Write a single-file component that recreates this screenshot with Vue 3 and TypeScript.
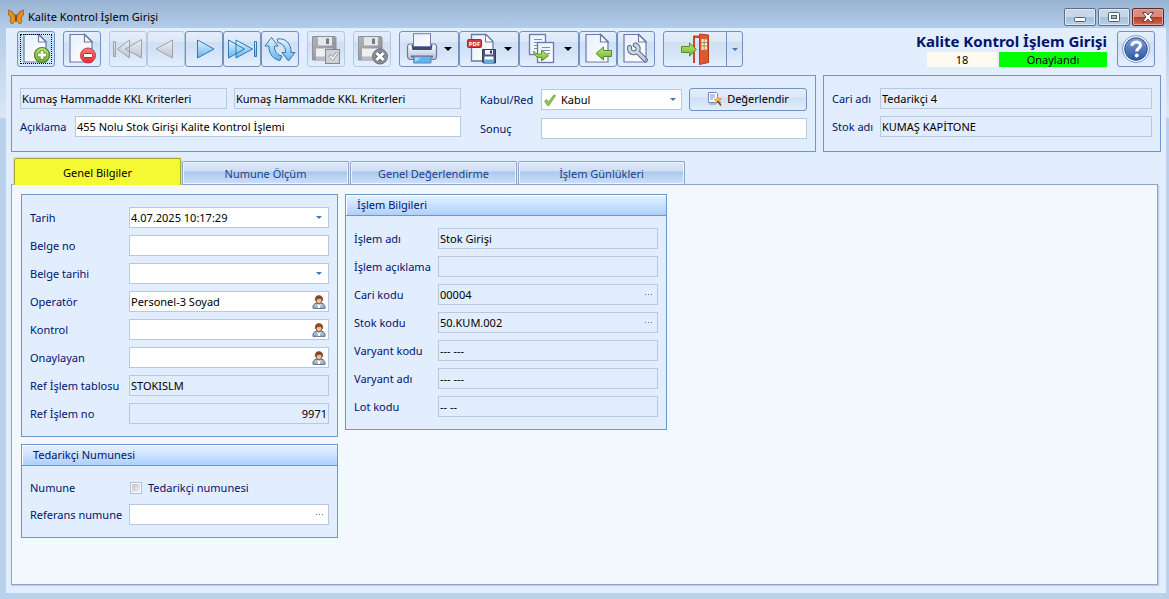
<script setup lang="ts">
import { ref } from 'vue'

type Adornment = 'date' | 'user' | 'more' | ''

interface Field {
  id: string
  label: string
  value: string
  adornment: Adornment
  readonly: boolean
  right?: boolean
}

const general = ref<Field[]>([
  { id: 'tarih', label: 'Tarih', value: '4.07.2025 10:17:29', adornment: 'date', readonly: false },
  { id: 'belge-no', label: 'Belge no', value: '', adornment: '', readonly: false },
  { id: 'belge-tarihi', label: 'Belge tarihi', value: '', adornment: 'date', readonly: false },
  { id: 'operator', label: 'Operatör', value: 'Personel-3 Soyad', adornment: 'user', readonly: false },
  { id: 'kontrol', label: 'Kontrol', value: '', adornment: 'user', readonly: false },
  { id: 'onaylayan', label: 'Onaylayan', value: '', adornment: 'user', readonly: false },
  { id: 'ref-tablo', label: 'Ref İşlem tablosu', value: 'STOKISLM', adornment: '', readonly: true },
  { id: 'ref-no', label: 'Ref İşlem no', value: '9971', adornment: '', readonly: true, right: true }
])

const operation = ref<Field[]>([
  { id: 'islem-adi', label: 'İşlem adı', value: 'Stok Girişi', adornment: '', readonly: true },
  { id: 'islem-aciklama', label: 'İşlem açıklama', value: '', adornment: '', readonly: true },
  { id: 'cari-kodu', label: 'Cari kodu', value: '00004', adornment: 'more', readonly: true },
  { id: 'stok-kodu', label: 'Stok kodu', value: '50.KUM.002', adornment: 'more', readonly: true },
  { id: 'varyant-kodu', label: 'Varyant kodu', value: '--- ---', adornment: '', readonly: true },
  { id: 'varyant-adi', label: 'Varyant adı', value: '--- ---', adornment: '', readonly: true },
  { id: 'lot-kodu', label: 'Lot kodu', value: '-- --', adornment: '', readonly: true }
])

const tabs = ['Genel Bilgiler', 'Numune Ölçüm', 'Genel Değerlendirme', 'İşlem Günlükleri']
const activeTab = ref(0)

const criteriaCode = ref('Kumaş Hammadde KKL Kriterleri')
const criteriaName = ref('Kumaş Hammadde KKL Kriterleri')
const description = ref('455 Nolu Stok Girişi Kalite Kontrol İşlemi')
const decision = ref('Kabul')
const result = ref('')
const account = ref('Tedarikçi 4')
const stock = ref('KUMAŞ KAPİTONE')
const supplierSample = ref(false)
const referenceSample = ref('')
</script>

<template>
  <div class="window">
    <svg class="defs" width="0" height="0" aria-hidden="true">
      <defs>
        <linearGradient id="gPage" x1="0" y1="0" x2="1" y2="1">
          <stop offset="0" stop-color="#e9effa" /><stop offset="1" stop-color="#ffffff" />
        </linearGradient>
        <linearGradient id="gBlue" x1="0" y1="0" x2="0" y2="1">
          <stop offset="0" stop-color="#e4f6ff" /><stop offset="1" stop-color="#62b4ee" />
        </linearGradient>
        <linearGradient id="gGrey" x1="0" y1="0" x2="0" y2="1">
          <stop offset="0" stop-color="#eceef2" /><stop offset="1" stop-color="#bfc4cc" />
        </linearGradient>
        <linearGradient id="gGreen" x1="0" y1="0" x2="0" y2="1">
          <stop offset="0" stop-color="#c5e878" /><stop offset="1" stop-color="#6db32c" />
        </linearGradient>
        <linearGradient id="gRed" x1="0" y1="0" x2="0" y2="1">
          <stop offset="0" stop-color="#fb8080" /><stop offset="1" stop-color="#e02733" />
        </linearGradient>
        <linearGradient id="gDisk" x1="0" y1="0" x2="1" y2="1">
          <stop offset="0" stop-color="#b3b5ba" /><stop offset="1" stop-color="#85888f" />
        </linearGradient>
        <linearGradient id="gHelp" x1="0" y1="0" x2="0" y2="1">
          <stop offset="0" stop-color="#7f9fd6" /><stop offset="1" stop-color="#2d57a5" />
        </linearGradient>
        <linearGradient id="gPrinter" x1="0" y1="0" x2="0" y2="1">
          <stop offset="0" stop-color="#ffffff" /><stop offset="1" stop-color="#b5bfd8" />
        </linearGradient>
        <symbol id="page" viewBox="0 0 32 32">
          <path d="M4 1.500h15l7 7v20.500H4z" fill="url(#gPage)" stroke="#687ba8" stroke-width="1.200" />
          <path d="M18.500 1.500v7.500H26z" fill="#fff" stroke="#687ba8" stroke-width="1.200" />
        </symbol>
        <symbol id="disk" viewBox="0 0 32 32">
          <path d="M2.500 3.500h22.500l1 1v22.500h-23.500z" fill="url(#gDisk)" stroke="#8d9098" />
          <path d="M8 4h14v8.500H8z" fill="#e6e7ea" />
          <path d="M16 5.500h3v5.500h-3z" fill="#777a82" />
          <path d="M6 15.500h16.500V27H6z" fill="#f0f0f2" />
          <path d="M6 23.500h16.500V27H6z" fill="#b9bbc1" />
        </symbol>
        <symbol id="user" viewBox="0 0 14 14">
          <path d="M1 13.300c-.3-2.800.8-4.500 3.500-5.300h5c2.700.8 3.800 2.500 3.500 5.300z" fill="#a9b9cf" stroke="#54627b" />
          <path d="M5.300 8 7 10.500 8.700 8 8 13H6z" fill="#fff" />
          <ellipse cx="7" cy="5.300" rx="2.800" ry="3.500" fill="#f3c095" stroke="#704228" stroke-width=".8" />
          <path d="M3.500 6C2.700 2 4.500.5 7.200.6c2.800.1 4 2 3.300 5.400C10 4 9 3.300 7.500 3.600 5.500 4 4.300 3.800 3.500 6z" fill="#8c4a22" stroke="#5e3217" stroke-width=".5" />
        </symbol>
      </defs>
    </svg>

    <header class="titlebar">
      <svg class="app-icon" width="16" height="16" viewBox="0 0 16 16" aria-hidden="true">
        <path d="M7.600 9C7.200 5 4 1.500.3 1.200c-.3 2.800.2 5.300 1.700 6.500l1.200.8C2 10 1.900 13 3.500 14.700 6 14.500 7.500 12 7.700 9.500z" fill="#ef9013" stroke="#7d4a14" stroke-width=".7" />
        <path d="M8.400 9C8.800 5 12 1.500 15.700 1.200c.3 2.800-.2 5.300-1.700 6.500l-1.200.8c1.200 1.500 1.300 4.500-.3 6.200C10 14.500 8.500 12 8.300 9.500z" fill="#ef9013" stroke="#7d4a14" stroke-width=".7" />
        <path d="M2 3c2 1 4 3 5 5.500M14 3c-2 1-4 3-5 5.500" stroke="#c96a0b" stroke-width=".7" fill="none" />
        <path d="M8 5.500v7" stroke="#50351f" stroke-width="1.200" />
      </svg>
      <span class="caption">Kalite Kontrol İşlem Girişi</span>
      <div class="window-buttons">
        <button type="button" class="wbtn" aria-label="Simge durumuna küçült">
          <svg width="12" height="12" viewBox="0 0 12 12"><rect x=".5" y="6.500" width="11" height="4" rx="1" fill="#fff" stroke="#535d6b" /></svg>
        </button>
        <button type="button" class="wbtn" aria-label="Ekranı kapla">
          <svg width="12" height="12" viewBox="0 0 12 12"><rect x=".5" y="1.500" width="11" height="9" rx="1" fill="#fff" stroke="#535d6b" /><rect x="3.500" y="4.500" width="5" height="3" fill="#a6b9d2" stroke="#535d6b" /></svg>
        </button>
        <button type="button" class="wbtn close" aria-label="Kapat">
          <svg width="12" height="12" viewBox="0 0 12 12"><path d="M.6 1.500h3.400l2 2.500 2-2.500h3.400L8.200 6l3.200 4.500H8L6 8l-2 2.500H.6L3.800 6z" fill="#fff" stroke="#5b4045" /></svg>
        </button>
      </div>
    </header>

    <main class="client">
      <div class="toolbar">
        <div class="tools">
          <button type="button" class="tool focused" aria-label="Yeni">
            <svg width="32" height="32" viewBox="0 0 32 32">
              <use href="#page" />
              <circle cx="22" cy="22" r="7.500" fill="url(#gGreen)" stroke="#477f1f" stroke-width="1.200" />
              <path d="M22 17.500v9M17.500 22h9" stroke="#477f1f" stroke-width="4.600" />
              <path d="M22 18v8M18 22h8" stroke="#fff" stroke-width="2.800" />
            </svg>
          </button>
          <button type="button" class="tool" aria-label="Sil">
            <svg width="32" height="32" viewBox="0 0 32 32">
              <use href="#page" />
              <circle cx="22" cy="22.500" r="7.500" fill="url(#gRed)" stroke="#c93744" />
              <rect x="17.500" y="20.500" width="9" height="4" rx="1" fill="#fff" stroke="#b82732" />
            </svg>
          </button>

          <div class="tool-group">
            <button type="button" class="tool" disabled aria-label="İlk kayıt">
              <svg width="32" height="32" viewBox="0 0 32 32" fill="url(#gGrey)" stroke="#9ca1aa">
                <path d="M1.500 8.500h2v15h-2zM5.500 16 17.500 7v18zM13.500 16 29.500 6.500v18.500z" />
              </svg>
            </button>
            <button type="button" class="tool" disabled aria-label="Önceki kayıt">
              <svg width="32" height="32" viewBox="0 0 32 32" fill="url(#gGrey)" stroke="#9ca1aa">
                <path d="M6 16 22.500 7v18z" />
              </svg>
            </button>
            <button type="button" class="tool" aria-label="Sonraki kayıt">
              <svg width="32" height="32" viewBox="0 0 32 32" fill="url(#gBlue)" stroke="#3376b7">
                <path d="M26 16 9.500 7v18z" />
              </svg>
            </button>
            <button type="button" class="tool" aria-label="Son kayıt">
              <svg width="32" height="32" viewBox="0 0 32 32" fill="url(#gBlue)" stroke="#3376b7">
                <path d="M18.500 16 2.500 7v18zM26.500 16 10 7v18zM28.500 8.500h2v15h-2z" />
              </svg>
            </button>
            <button type="button" class="tool" aria-label="Yenile">
              <svg width="32" height="32" viewBox="0 0 32 32" fill="url(#gBlue)" stroke="#39749f" stroke-linejoin="round">
                <path d="M7.500 4.500 14 13h-3.500c-.5 5 2.500 9 7.500 10l-2 4.500C9 26.500 4.500 20.500 5 13H1z" />
                <path d="M24.500 28 18 19.500h3.500c.5-5-2.500-9-7.500-10l-.8-3.500c8.300-1.500 14.300 5 13.800 13.500h4z" />
              </svg>
            </button>
          </div>

          <button type="button" class="tool" disabled aria-label="Kaydet">
            <svg width="32" height="32" viewBox="0 0 32 32">
              <use href="#disk" />
              <rect x="15.500" y="16.500" width="14" height="14" fill="#cfd1d5" stroke="#83868c" />
              <path d="m18.500 23 2.500-1.500 1.800 2.500 3.700-5 1.500 1.500L23 27.500z" fill="#f5f5f6" stroke="#8b8e94" stroke-width=".8" />
            </svg>
          </button>
          <button type="button" class="tool" disabled aria-label="Vazgeç">
            <svg width="32" height="32" viewBox="0 0 32 32">
              <use href="#disk" />
              <circle cx="24" cy="23.500" r="7.500" fill="#8d9096" stroke="#6b6e75" />
              <path d="m20.500 20 7 7M27.500 20l-7 7" stroke="#65686f" stroke-width="4.600" />
              <path d="m20.500 20 7 7M27.500 20l-7 7" stroke="#fff" stroke-width="3" />
            </svg>
          </button>

          <div class="tool-group">
            <button type="button" class="tool wide" aria-label="Yazdır">
              <svg width="32" height="32" viewBox="0 0 32 32">
                <path d="M1.500 14c0-1.500 1-3 2.500-3h3v4.500h18V11h3c1.500 0 2.500 1.500 2.500 3v9c0 2-1 3.500-3 3.500H4.500c-2 0-3-1.500-3-3.500z" fill="url(#gPrinter)" stroke="#68779d" stroke-width="1.200" />
                <path d="M5.500 12h21l-1 5h-19z" fill="#404a66" />
                <rect x="7.500" y=".7" width="17" height="12.800" fill="url(#gPage)" stroke="#6d7fad" />
                <path d="M5 22.500h22v2H5z" fill="#5d6b8d" />
                <path d="M8 23.500h17v6.500H7.500z" fill="#5bb6ef" stroke="#7283a8" />
                <path d="m9 29 6-4.500H9z" fill="#a8dcfa" />
              </svg>
              <i class="drop"></i>
            </button>
            <button type="button" class="tool wide" aria-label="PDF olarak kaydet">
              <svg width="32" height="32" viewBox="0 0 32 32">
                <path d="M5.500 1.500h14.500l7 7V28H5.500z" fill="url(#gPage)" stroke="#687ba8" stroke-width="1.300" />
                <path d="M19.500 1.500V9H27z" fill="#fff" stroke="#687ba8" />
                <rect x="1.500" y="6.500" width="14" height="8" rx="1" fill="#d73940" stroke="#b41e27" />
                <text x="8.500" y="13" text-anchor="middle" class="pdf">PDF</text>
                <path d="M16.500 16.500h13v13.500h-12l-1-1z" fill="#46567c" stroke="#303d5b" />
                <path d="M19 17h8v4.500h-8z" fill="#eef2fb" /><path d="M24 17.500h2v3h-2z" fill="#34405d" />
                <path d="M18.500 23.500h9v6h-9z" fill="#fff" /><path d="M18.500 26.500h9v3h-9z" fill="#4eafec" />
              </svg>
              <i class="drop"></i>
            </button>
            <button type="button" class="tool wide" aria-label="Kopyala">
              <svg width="32" height="32" viewBox="0 0 32 32">
                <rect x="3.500" y="1.500" width="16" height="20" fill="url(#gPage)" stroke="#687ba8" stroke-width="1.300" />
                <path d="M8 6.500h8M8 9.500h5M8 12.500h3M8 15.500h3" stroke="#6f91c8" />
                <rect x="11.500" y="9.500" width="16" height="20" fill="url(#gPage)" stroke="#687ba8" stroke-width="1.300" />
                <path d="M16 14.500h8M16 17.500h8M21 20.500h3" stroke="#6f91c8" />
                <path d="M7.500 18c2 3 5 3.500 8 3v-3.500l7 5.200-7 5.300v-3.500C11 25 8 22.500 7.500 18z" fill="url(#gGreen)" stroke="#59912a" />
              </svg>
              <i class="drop"></i>
            </button>
            <button type="button" class="tool" aria-label="İçe aktar">
              <svg width="32" height="32" viewBox="0 0 32 32">
                <use href="#page" />
                <path d="m14 20.500 7.500-6.500v3.500h8v6h-8V27z" fill="url(#gGreen)" stroke="#4f8e28" />
              </svg>
            </button>
            <button type="button" class="tool" aria-label="Ayarlar">
              <svg width="32" height="32" viewBox="0 0 32 32" fill="none" stroke-linecap="round">
                <use href="#page" />
                <path d="M9.500 14.500c-.5 3 1.500 5.500 4.500 5.200 3-.2 4.500-2.200 4.200-4.500-.2-1.600-1.200-2.700-3-3.200M17 18.500l8.500 8.500" stroke="#5a6a88" stroke-width="5" />
                <path d="M9.500 14.500c-.5 3 1.500 5.500 4.500 5.200 3-.2 4.500-2.200 4.200-4.500-.2-1.600-1.200-2.700-3-3.200M17 18.500l8.500 8.500" stroke="#c9d4e5" stroke-width="3" />
                <circle cx="25.500" cy="27" r=".8" fill="#58698a" />
              </svg>
            </button>
          </div>

          <div class="tool-group split">
            <button type="button" class="tool exit" aria-label="Çıkış">
              <svg width="32" height="32" viewBox="0 0 32 32">
                <path d="M14 30V2.500h9V5h-7v25z" fill="#cb4926" />
                <path d="m20.500 1 9 1v27.500l-9 2z" fill="#dd5a30" stroke="#b43c1c" />
                <path d="m22.500 6 5.500.4v10l-5.500.6z" fill="#f7ecc4" />
                <path d="M25.200 6v11M22.500 9.500H28M22.500 13H28" stroke="#a58a5c" />
                <path d="M2.500 13.500h8V10l7 6.500-7 6.500v-3.500h-8z" fill="url(#gGreen)" stroke="#4f8e28" />
              </svg>
            </button>
            <button type="button" class="tool narrow" aria-label="Çıkış seçenekleri"><i class="caret"></i></button>
          </div>
        </div>

        <div class="status">
          <h1>Kalite Kontrol İşlem Girişi</h1>
          <div class="status-row">
            <span class="record">18</span>
            <span class="state">Onaylandı</span>
          </div>
        </div>
        <button type="button" class="tool" aria-label="Yardım">
          <svg width="32" height="32" viewBox="0 0 32 32">
            <circle cx="16" cy="16" r="13.500" fill="#f4f8ff" stroke="#7f9ccb" />
            <circle cx="16" cy="16" r="11.300" fill="url(#gHelp)" stroke="#2c509b" />
            <path d="M12 12.800c.2-5 8.500-5 8.500-.5 0 3-3.800 3-3.800 6.200" fill="none" stroke="#fff" stroke-width="3.200" />
            <circle cx="16.700" cy="22.500" r="2" fill="#fff" />
          </svg>
        </button>
      </div>

      <div class="summary">
        <section class="box summary-main">
          <div class="left">
            <div class="pair">
              <input v-model="criteriaCode" class="input ro code" readonly aria-label="Kriter kodu" />
              <input v-model="criteriaName" class="input ro name" readonly aria-label="Kriter adı" />
            </div>
            <div class="line l-desc">
              <label for="aciklama">Açıklama</label>
              <input id="aciklama" v-model="description" class="input" />
            </div>
          </div>
          <div class="right">
            <div class="line l-dec">
              <label for="kabul">Kabul/Red</label>
              <div class="field decision">
                <select id="kabul" v-model="decision" class="input">
                  <option>Kabul</option>
                  <option>Red</option>
                </select>
                <svg class="tick" width="12" height="12" viewBox="0 0 12 12" aria-hidden="true">
                  <path d="m.7 7 2-1.500L4.300 8 10 1l1.500.5L5 11.500H3.500z" fill="#8fc653" stroke="#70a03e" stroke-width=".8" />
                </svg>
                <i class="caret end"></i>
              </div>
              <button type="button" class="evaluate">
                <svg width="15" height="14" viewBox="0 0 15 14" aria-hidden="true">
                  <path d="M1.500.5h8l1 1v9h-9z" fill="#fff" stroke="#7587b5" />
                  <path d="M3 3h5M3 5h5M3 7h3" stroke="#7194ca" />
                  <path d="M2 12h7" stroke="#8793b1" />
                  <path d="m10.500 4.500 1.200 2.200 2.600-.2-1.700 2 1 2.500-2.400-1-2.100 1.500.3-2.500L7.500 7.500l2.400-.5z" fill="#ffc93c" stroke="#e68122" stroke-width=".8" />
                  <path d="m10.500 9 3.500 4.500" stroke="#454d66" stroke-width="1.400" />
                </svg>
                <span>Değerlendir</span>
              </button>
            </div>
            <div class="line l-dec">
              <label for="sonuc">Sonuç</label>
              <input id="sonuc" v-model="result" class="input" />
            </div>
          </div>
        </section>
        <section class="box summary-side">
          <div class="line l-side">
            <label for="cari-adi">Cari adı</label>
            <input id="cari-adi" v-model="account" class="input ro" readonly />
          </div>
          <div class="line l-side">
            <label for="stok-adi">Stok adı</label>
            <input id="stok-adi" v-model="stock" class="input ro" readonly />
          </div>
        </section>
      </div>

      <div class="tabs" role="tablist">
        <button
          v-for="(tab, i) in tabs"
          :key="tab"
          type="button"
          role="tab"
          class="tab"
          :class="{ active: i === activeTab }"
          :aria-selected="i === activeTab"
          @click="activeTab = i"
        >{{ tab }}</button>
      </div>

      <div class="panel" role="tabpanel">
        <div v-if="activeTab === 0" class="columns">
          <div class="col first">
            <section class="box form">
              <div v-for="f in general" :key="f.id" class="line l-gen">
                <label :for="f.id">{{ f.label }}</label>
                <div class="field">
                  <input :id="f.id" v-model="f.value" class="input" :class="{ ro: f.readonly, num: f.right }" :readonly="f.readonly" />
                  <button v-if="f.adornment" type="button" class="adorn" :aria-label="f.label + ' seç'">
                    <i v-if="f.adornment === 'date'" class="caret"></i>
                    <svg v-else width="14" height="14"><use href="#user" /></svg>
                  </button>
                </div>
              </div>
            </section>
            <section class="box">
              <h2>Tedarikçi Numunesi</h2>
              <div class="form">
                <div class="line l-gen short">
                  <span class="text">Numune</span>
                  <label class="check"><input v-model="supplierSample" type="checkbox" /><span>Tedarikçi numunesi</span></label>
                </div>
                <div class="line l-gen">
                  <label for="ref-numune">Referans numune</label>
                  <div class="field">
                    <input id="ref-numune" v-model="referenceSample" class="input" />
                    <button type="button" class="adorn" aria-label="Referans numune seç"><i class="dots"></i></button>
                  </div>
                </div>
              </div>
            </section>
          </div>
          <div class="col second">
            <section class="box">
              <h2>İşlem Bilgileri</h2>
              <div class="form">
                <div v-for="f in operation" :key="f.id" class="line l-op">
                  <label :for="f.id">{{ f.label }}</label>
                  <div class="field">
                    <input :id="f.id" v-model="f.value" class="input ro" readonly />
                    <button v-if="f.adornment" type="button" class="adorn" :aria-label="f.label + ' seç'"><i class="dots"></i></button>
                  </div>
                </div>
              </div>
            </section>
          </div>
        </div>
      </div>
    </main>
  </div>
</template>

<style>
html,
body {
  margin: 0;
  background: #b9d1ea;
}
</style>

<style scoped>
.window,
.window * {
  box-sizing: border-box;
}
.window {
  min-height: 100vh;
  display: flex;
  flex-direction: column;
  padding: 0 3px 6px 6px;
  background: linear-gradient(#98b3d2 0, #b3cce8 28px, #dbe7f4 117px, #b9d1ea 119px);
  font-family: "Noto Sans", "Open Sans", sans-serif;
  font-size: 11px;
  line-height: 16px;
  color: #00146e;
}
button,
input,
select {
  font: inherit;
  margin: 0;
}
.defs {
  position: absolute;
}
.titlebar {
  height: 28px;
  display: flex;
  align-items: center;
  padding: 5px 2px 0 2px;
  color: #000;
}
.caption {
  flex: 1;
  margin-left: 4px;
}
.window-buttons {
  display: flex;
  gap: 2px;
}
.wbtn {
  width: 32px;
  height: 18px;
  padding: 0;
  display: flex;
  align-items: center;
  justify-content: center;
  border: 1px solid #5c6f89;
  border-radius: 2px;
  box-shadow: inset 0 0 0 1px #dce8f5;
  background: linear-gradient(#c8d8ea 50%, #a6bfdb 50%, #b9d0ea);
}
.wbtn.close {
  border-color: #5b2a2c;
  box-shadow: inset 0 0 0 1px #e3a397;
  background: linear-gradient(#d98d80 50%, #b63a27 50%, #cf6a50);
}
.client {
  flex: 1;
  display: flex;
  flex-direction: column;
  padding: 3px 5px 8px;
  background: #e2edfe;
}
.toolbar {
  display: flex;
  align-items: flex-start;
  padding: 0 6px;
  margin-bottom: 8px;
}
.tools {
  flex: 1;
  display: flex;
  gap: 8px;
}
.tool-group {
  display: flex;
}
.tool {
  width: 38px;
  height: 36px;
  padding: 0;
  display: flex;
  align-items: center;
  justify-content: center;
  border: 1px solid #7191c0;
  border-radius: 3px;
  background: linear-gradient(#e4eefc 0, #dde8f7 28%, #cfdff4 30%, #d4e3f7 60%, #e4f0ff);
}
.tool:disabled {
  border-color: #b5c8e0;
}
.tool.focused {
  background: linear-gradient(#d2e6fa, #b9d8f4 40%, #d8ebfd);
  outline: 1px dotted #000;
  outline-offset: -4px;
}
.tool.wide {
  width: 60px;
  gap: 6px;
}
.tool.exit {
  width: 64px;
  border-radius: 3px 0 0 3px;
}
.tool.narrow {
  width: 17px;
  margin-left: -1px;
  border-radius: 0 3px 3px 0;
}
.drop {
  border: 4px solid transparent;
  border-top-color: #000;
  border-bottom: 0;
}
.caret {
  border: 3px solid transparent;
  border-top-color: #4576b5;
  border-bottom: 0;
}
.pdf {
  font: bold 6px "Open Sans", sans-serif;
  fill: #fff;
}
.status {
  margin-right: 10px;
  display: flex;
  flex-direction: column;
  align-items: flex-end;
}
h1 {
  margin: 0;
  font-size: 15px;
  line-height: 21px;
  font-weight: 700;
  white-space: nowrap;
}
.status-row {
  display: flex;
  gap: 2px;
  line-height: 15px;
  text-align: center;
  color: #000;
}
.record {
  width: 70px;
  background: #fffaf0;
}
.state {
  width: 108px;
  background: #00ff00;
}
.box {
  border: 1px solid #6e95cf;
  background: #e2edfe;
}
.summary {
  display: flex;
  gap: 7px;
}
.summary-main {
  flex: 805 1 805px;
  min-width: 0;
  display: flex;
  gap: 19px;
  padding: 12px 8px;
}
.left {
  flex: 441 1 0;
  min-width: 0;
}
.right {
  flex: 327 1 0;
  min-width: 0;
}
.left,
.right,
.form,
.summary-side {
  display: flex;
  flex-direction: column;
  gap: 7px;
}
.summary-side {
  flex: 338 1 338px;
  min-width: 0;
  padding: 12px 8px;
}
.form {
  padding: 12px 8px;
}
.pair {
  display: flex;
  gap: 7px;
}
.code {
  flex: 207 1 207px;
}
.name {
  flex: 227 1 227px;
}
.line {
  display: grid;
  align-items: center;
}
.line label,
.text {
  white-space: nowrap;
}
.l-desc {
  grid-template-columns: 55px 1fr;
}
.l-dec {
  grid-template-columns: 61px 1fr auto;
}
.l-side {
  grid-template-columns: 48px 1fr;
}
.l-gen {
  grid-template-columns: 99px 1fr;
}
.l-op {
  grid-template-columns: 84px 1fr;
}
.l-dec > input {
  grid-column: 2 / 4;
}
.short {
  height: 19px;
}
.input {
  width: 100%;
  min-width: 0;
  height: 21px;
  padding: 0 1px 1px;
  border: 1px solid #b5c9e3;
  border-radius: 0;
  outline: 0;
  background: #fff;
  color: #000;
}
.input.ro {
  background: #e2edfe;
}
.input.num {
  text-align: right;
}
select.input {
  display: block;
  appearance: none;
  padding: 0 18px 0 19px;
}
.field {
  position: relative;
  min-width: 0;
}
.tick {
  position: absolute;
  left: 3px;
  top: 5px;
}
.end {
  position: absolute;
  right: 6px;
  top: 9px;
}
.field .input {
  display: block;
}
.adorn {
  position: absolute;
  right: 1px;
  top: 1px;
  width: 18px;
  height: 19px;
  padding: 0;
  display: flex;
  align-items: center;
  justify-content: center;
  border: 0;
  background: none;
}
.dots {
  width: 1px;
  height: 1px;
  background: #4576b5;
  box-shadow: -3px 0 #4576b5, 3px 0 #4576b5;
}
.evaluate {
  width: 118px;
  height: 23px;
  margin-left: 7px;
  padding: 0 0 1px;
  display: flex;
  align-items: center;
  justify-content: center;
  gap: 5px;
  border: 1px solid #7191c0;
  border-radius: 3px;
  color: #000;
  background: linear-gradient(#e4eefc 0, #dbe7f7 40%, #cddef4 42%, #e2eefe);
}
.tabs {
  display: flex;
  align-items: flex-end;
  gap: 1px;
  height: 26px;
  margin-top: 6px;
  padding-left: 3px;
}
.tab {
  width: 167px;
  height: 23px;
  padding: 1px 0 0;
  border: 1px solid #8ea3c9;
  border-bottom: 0;
  border-radius: 2px 2px 0 0;
  box-shadow: inset 0 0 0 1px #ecf4ff;
  color: #1c3f8c;
  background: linear-gradient(#dfe9f7 0, #cfdef2 42%, #abc7ee 44%, #cfe1fa);
}
.tab.active {
  position: relative;
  height: 27px;
  margin-bottom: -1px;
  border-color: #a5a834;
  box-shadow: 0 0 0 1px #e6ee3c;
  color: #000;
  background: #f5f933;
  clip-path: inset(-1px -1px 0);
}
.panel {
  flex: 1;
  margin-right: 3px;
  padding: 9px;
  border: 1px solid #8ea3c9;
  box-shadow: 1px 1px 1px #bccce6;
  background: #f3f8ff;
}
.columns {
  display: flex;
  align-items: flex-start;
  gap: 7px;
}
.col {
  display: flex;
  flex-direction: column;
  gap: 7px;
}
.first {
  flex: 0 1 317px;
}
.second {
  flex: 0 1 322px;
}
h2 {
  margin: 0;
  height: 21px;
  padding: 0 11px;
  font-size: 11px;
  font-weight: 400;
  line-height: 19px;
  border-bottom: 1px solid #6e95cf;
  box-shadow: inset 1px 1px #fff;
  background: linear-gradient(#e9f3ff, #add0ff);
}
.check {
  display: flex;
  align-items: center;
  gap: 6px;
}
.check input {
  appearance: none;
  width: 12px;
  height: 12px;
  margin-left: 1px;
  border: 1px solid #a9bfdd;
  background: linear-gradient(135deg, #b9bfc8, #f5f6f7);
  box-shadow: inset 0 0 0 1px #fff;
}
.check input:checked {
  background: #4576b5;
}
</style>
